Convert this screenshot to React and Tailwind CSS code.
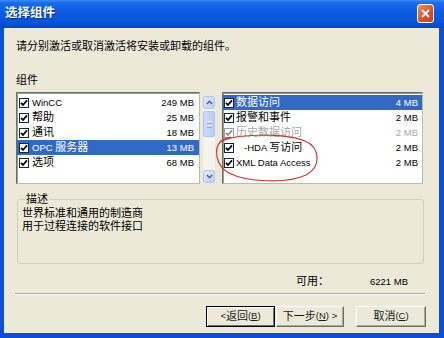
import React from "react";

function Check({ disabled }) {
  return (
    <span
      className={`w-[10px] h-[10px] shrink-0 border bg-white flex items-center justify-center ${
        disabled ? "border-[#9c9c9c]" : "border-[#1a2533]"
      }`}
    >
      <svg width="8" height="8" viewBox="0 0 8 8">
        <path
          d="M1 3.8 L3 6 L7 1.4"
          fill="none"
          stroke={disabled ? "#8c8c8c" : "#000"}
          strokeWidth="1.8"
        />
      </svg>
    </span>
  );
}

function L({ children }) {
  return <span className="text-[9.5px]">{children}</span>;
}

function Row({ name, size, selected, disabled, indent, left }) {
  const color = selected
    ? "bg-[#316ac5] text-white"
    : disabled
    ? "text-[#a8a8a8]"
    : "text-black";
  return (
    <div
      className={`h-[15px] flex items-center leading-[15px] text-[11px] whitespace-nowrap ${
        left ? "pl-[2px] pr-[5px] gap-[3px]" : "pl-[1px] pr-[4px] gap-[2px]"
      } ${color}`}
    >
      <Check disabled={disabled} />
      <span className={indent ? "pl-[8px]" : ""}>{name}</span>
      <span className="ml-auto">
        <L>{size}</L>
      </span>
    </div>
  );
}

function ScrollBtn({ dir }) {
  return (
    <div className="h-[13px] w-[12px] shrink-0 rounded-[2px] border border-[#b2c6f3] bg-[linear-gradient(135deg,#e2ebfe,#bccff8)] flex items-center justify-center">
      <svg width="7" height="5" viewBox="0 0 7 5">
        <path
          d={dir === "up" ? "M0.8 4 L3.5 1.3 L6.2 4" : "M0.8 1 L3.5 3.7 L6.2 1"}
          fill="none"
          stroke="#4d6185"
          strokeWidth="1.5"
        />
      </svg>
    </div>
  );
}

function ScrollBar() {
  return (
    <div className="mt-[4px] h-[87px] w-[12px] bg-[#f4f3ee] flex flex-col">
      <ScrollBtn dir="up" />
      <div className="mt-[2px] h-[26px] w-[12px] rounded-[2px] border border-[#aec3f2] bg-[linear-gradient(90deg,#cddbfd,#b8ccf6)] flex flex-col items-center justify-center gap-[1px]">
        <div className="w-[5px] h-px bg-[#eef3ff]" />
        <div className="w-[5px] h-px bg-[#8ea7df]" />
        <div className="w-[5px] h-px bg-[#eef3ff]" />
        <div className="w-[5px] h-px bg-[#8ea7df]" />
      </div>
      <div className="flex-1" />
      <ScrollBtn dir="down" />
    </div>
  );
}

function ListBox({ className, children }) {
  return (
    <div
      className={`h-[92px] bg-white border border-t-[#6e6e6e] border-l-[#6e6e6e] border-r-[#bdbab0] border-b-[#bdbab0] shadow-[inset_1px_1px_0_#9a9a9a] pt-[2px] ${className}`}
    >
      {children}
    </div>
  );
}

function Btn({ children, def, w }) {
  return (
    <div
      className={`${w} h-[21px] flex items-center justify-center text-[11px] text-[#1a1a1a] bg-[#ece9d8] ${
        def
          ? "border border-black shadow-[inset_1px_1px_0_#fff,inset_-1px_-1px_0_#716f64]"
          : "border border-t-white border-l-white border-r-[#716f64] border-b-[#716f64] shadow-[inset_-1px_-1px_0_#aca899]"
      }`}
    >
      {children}
    </div>
  );
}

export default function App() {
  return (
    <div className="relative w-[444px] h-[338px] bg-[#0c4ed4] flex flex-col overflow-hidden font-['Liberation_Sans','Noto_Sans_CJK_SC',sans-serif]">
      {/* Title bar */}
      <div className="h-[28px] shrink-0 flex items-center justify-between pl-[5px] pr-[10px] pb-[2px] bg-[linear-gradient(to_bottom,#3c8cf8_0%,#1a6aec_10%,#0b5be0_45%,#0755da_80%,#0448c6_100%)]">
        <span className="text-white font-bold text-[12.5px] leading-[14px] [text-shadow:1px_1px_0_#0a2d86]">
          选择组件
        </span>
        <div className="w-[17px] h-[19px] rounded-[3px] border border-white bg-[linear-gradient(135deg,#f08a62,#dc4e25_60%,#c93e17)] flex items-center justify-center">
          <svg width="9" height="9" viewBox="0 0 9 9">
            <path d="M1 1 L8 8 M8 1 L1 8" stroke="#fff" strokeWidth="1.8" />
          </svg>
        </div>
      </div>

      {/* Body */}
      <div className="ml-[4px] mr-[5px] h-[305px] bg-[#ece9d8] flex flex-col text-black">
        <div className="mt-[12px] pl-[12px] h-[12px] leading-[12px] text-[11px]">
          请分别激活或取消激活将安装或卸载的组件。
        </div>
        <div className="mt-[22px] pl-[12px] h-[12px] leading-[12px] text-[11px]">
          组件
        </div>

        <div className="mt-[6px] h-[92px] pl-[12px] flex">
          <ListBox className="w-[184px]">
            <Row left name={<L>WinCC</L>} size="249 MB" />
            <Row left name="帮助" size="25 MB" />
            <Row left name="通讯" size="18 MB" />
            <Row
              left
              selected
              name={
                <>
                  <L>OPC </L>服务器
                </>
              }
              size="13 MB"
            />
            <Row left name="选项" size="68 MB" />
          </ListBox>
          <div className="ml-[3px]">
            <ScrollBar />
          </div>
          <ListBox className="ml-[7px] w-[201px]">
            <Row selected name="数据访问" size="4 MB" />
            <Row name="报警和事件" size="2 MB" />
            <Row disabled name="历史数据访问" size="2 MB" />
            <Row
              indent
              name={
                <>
                  <L>-HDA </L>写访问
                </>
              }
              size="2 MB"
            />
            <Row name={<L>XML Data Access</L>} size="2 MB" />
          </ListBox>
        </div>

        <fieldset className="mt-[9px] ml-[13px] w-[407px] h-[71px] border border-[#d0d0bf] rounded-[3px] pl-[4px]">
          <legend className="ml-[3px] px-[1px] text-[11px] leading-[12px]">描述</legend>
          <div className="mt-[2px] text-[11px] leading-[13px]">
            <div>世界标准和通用的制造商</div>
            <div>用于过程连接的软件接口</div>
          </div>
        </fieldset>

        <div className="mt-[11px] h-[12px] flex items-center pl-[292px] text-[11px] leading-[12px]">
          <span>可用：</span>
          <span className="ml-[41px]">
            <L>6221 MB</L>
          </span>
        </div>

        <div className="mt-[6px] ml-[11px] w-[410px] h-[2px] border-t border-t-[#aca899] border-b border-b-white" />

        <div className="mt-[11px] flex justify-end pr-[13px]">
          <Btn def w="w-[69px]">
            <L>&lt; </L>返回<L>(</L>
            <span className="underline text-[9.5px]">B</span>
            <L>)</L>
          </Btn>
          <div className="ml-[1px]">
            <Btn w="w-[68px]">
              下一步<L>(</L>
              <span className="underline text-[9.5px]">N</span>
              <L>) &gt;</L>
            </Btn>
          </div>
          <div className="ml-[12px]">
            <Btn w="w-[70px]">
              取消<L>(</L>
              <span className="underline text-[9.5px]">C</span>
              <L>)</L>
            </Btn>
          </div>
        </div>
      </div>

      {/* Hand-drawn red annotation */}
      <svg
        className="absolute left-0 top-0 pointer-events-none"
        width="444"
        height="338"
        viewBox="0 0 444 338"
      >
        <path
          d="M219 143 C232 133, 285 133, 305 141 C321 148, 321 167, 306 175 C287 184, 246 182, 229 173 C216 166, 213 149, 221 141 Q225 138, 231 137"
          fill="none"
          stroke="#c83a3a"
          strokeWidth="1.2"
        />
      </svg>
    </div>
  );
}
